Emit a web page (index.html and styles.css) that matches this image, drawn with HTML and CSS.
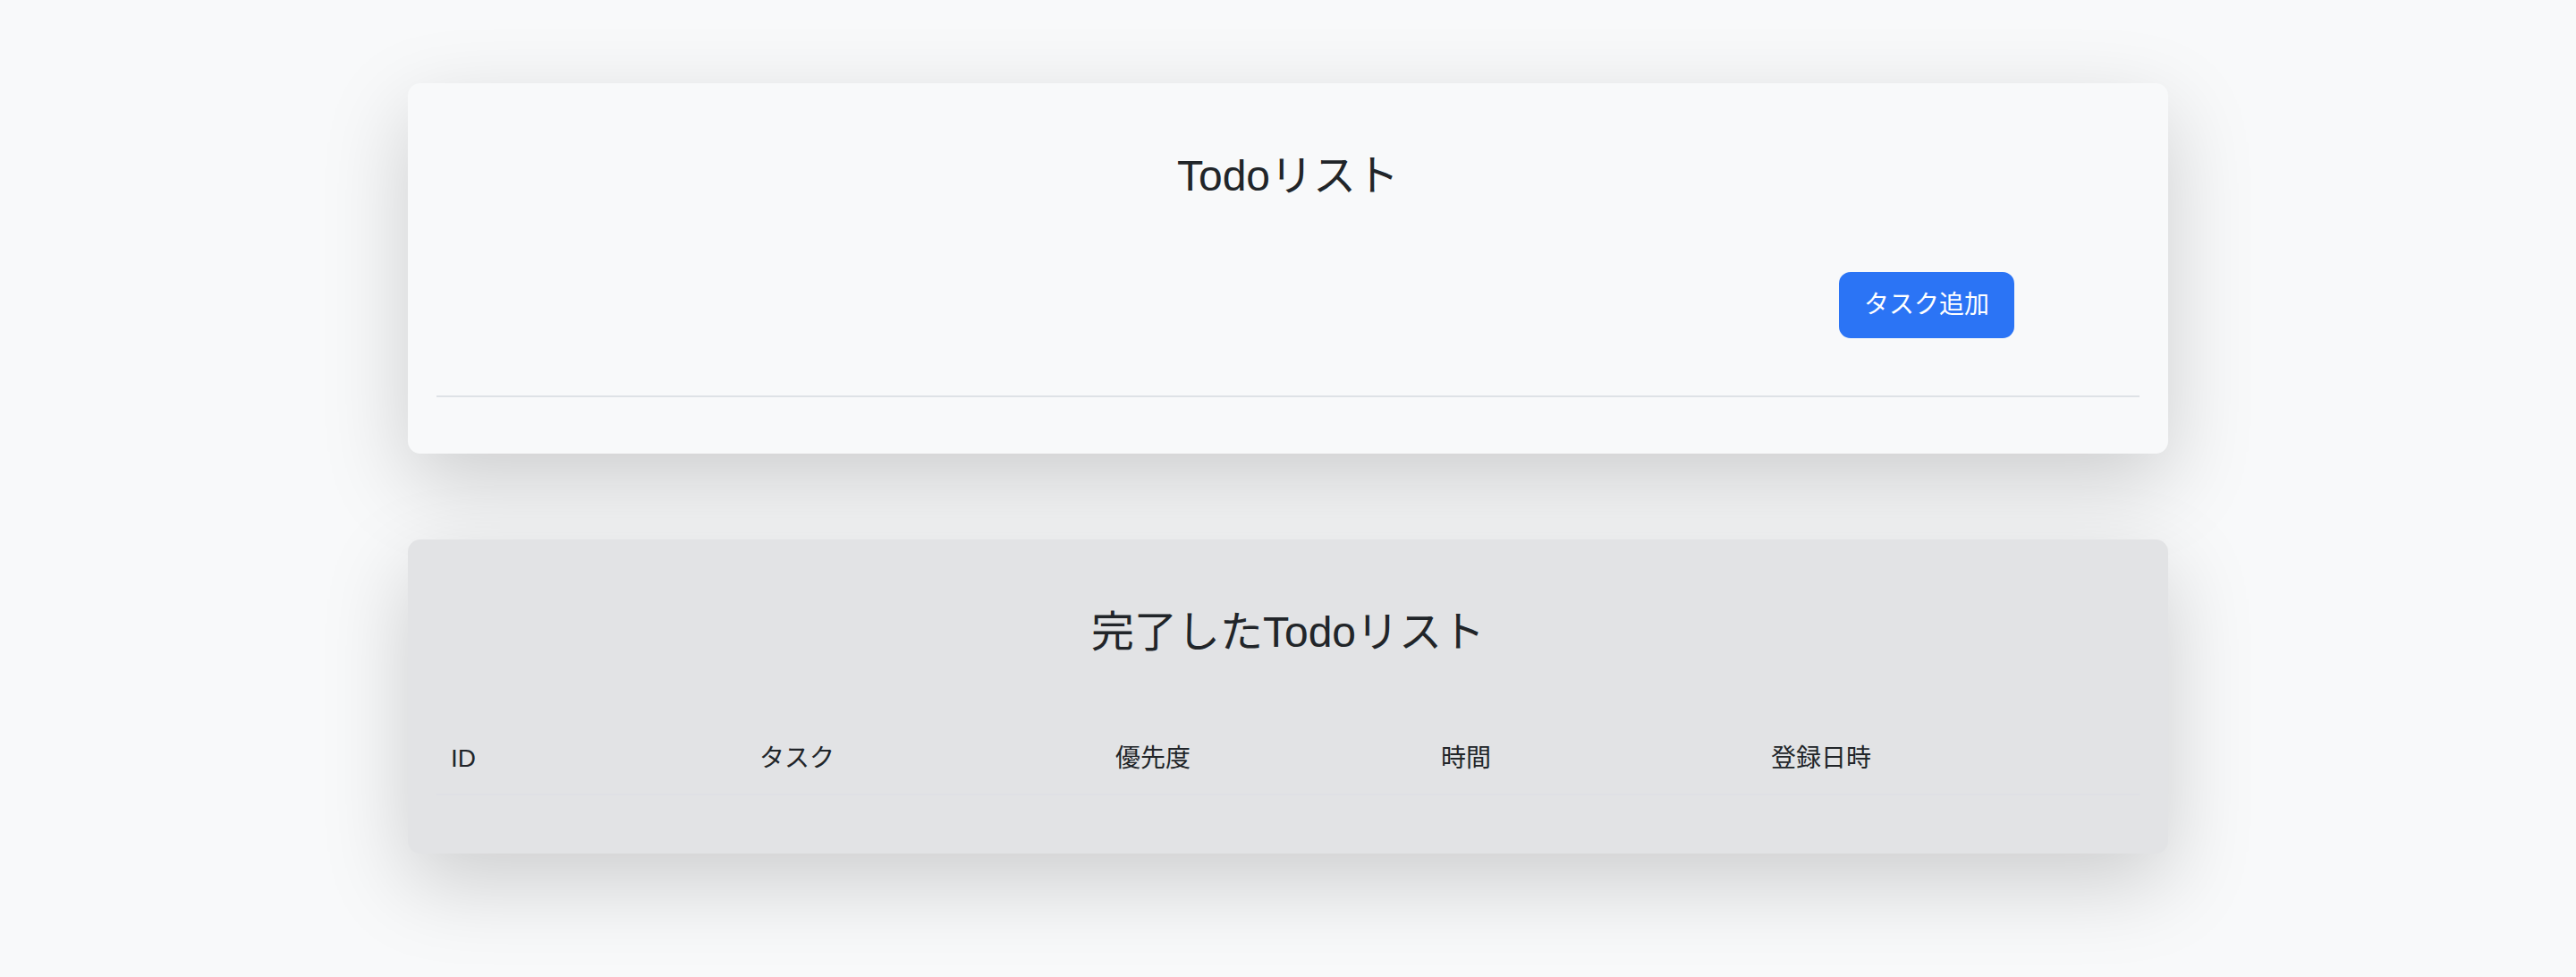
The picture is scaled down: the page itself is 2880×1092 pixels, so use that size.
FILE: index.html
```html
<!DOCTYPE html>
<html lang="ja">
<head>
<meta charset="utf-8">
<title>Todoリスト</title>
<link rel="stylesheet" href="styles.css">
</head>
<body>
<main class="page">
  <section class="card card-active">
    <h2 class="card-title">Todoリスト</h2>
    <div class="actions">
      <button class="btn-primary" type="button">タスク追加</button>
    </div>
    <hr class="divider">
  </section>

  <section class="card card-done">
    <h2 class="card-title">完了したTodoリスト</h2>
    <table class="todo-table">
      <thead>
        <tr>
          <th class="col-id">ID</th>
          <th class="col-task">タスク</th>
          <th class="col-priority">優先度</th>
          <th class="col-time">時間</th>
          <th class="col-date">登録日時</th>
        </tr>
      </thead>
      <tbody></tbody>
    </table>
  </section>
</main>
</body>
</html>
```
FILE: styles.css
```css
* {
  box-sizing: border-box;
}

html, body {
  margin: 0;
  padding: 0;
  background: #f8f9fa;
}

body {
  font-family: "Liberation Sans", "Noto Sans CJK JP", sans-serif;
  color: #212529;
  font-size: 28px;
  line-height: 1.5;
  min-height: 100vh;
}

.page {
  width: 1968px;
  min-height: 100vh;
  margin: 0 auto;
  padding: 93px 0 120px;
  display: flex;
  flex-direction: column;
  gap: 96px;
}

.card {
  border-radius: 14px;
  padding: 32px;
  box-shadow: 0 32px 96px rgba(0, 0, 0, 0.175);
}

.card-active {
  background: #f8f9fa;
}

.card-done {
  background: #e2e3e5;
}

.card-title {
  margin: 43px 0 0;
  font-size: 48px;
  font-weight: 400;
  line-height: 57.6px;
  text-align: center;
}

.actions {
  display: flex;
  justify-content: flex-end;
  margin-top: 78px;
  padding-right: 140px;
}

.btn-primary {
  font-family: inherit;
  font-size: 28px;
  line-height: 42px;
  color: #ffffff;
  background: #2b74f5;
  border: 2px solid #2b74f5;
  border-radius: 13px;
  padding: 14px 26px;
  cursor: pointer;
}

.divider {
  margin: 64px 0 31px;
  border: 0;
  border-top: 2px solid #dee2e6;
  height: 0;
}

.todo-table {
  width: 100%;
  margin-top: 74px;
  margin-bottom: 33px;
  border-collapse: collapse;
  table-layout: fixed;
}

.todo-table th {
  text-align: left;
  font-weight: 400;
  padding: 18px 16px;
  line-height: 42px;
  border-bottom: 2px solid #dfe0e5;
}

.col-id { width: 345px; }
.col-task { width: 398px; }
.col-priority { width: 364px; }
.col-time { width: 369px; }
.col-date { width: auto; }
```
